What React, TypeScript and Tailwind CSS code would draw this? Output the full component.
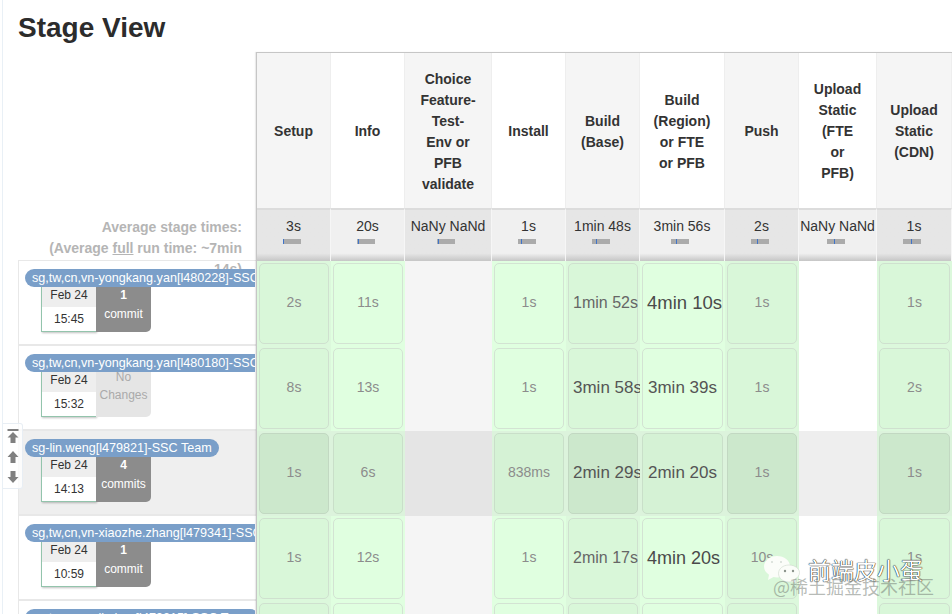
import React from "react";

type Cell = { t: string; big?: string } | null;

const heads = [
  ["Setup"],
  ["Info"],
  ["Choice", "Feature-", "Test-", "Env or", "PFB", "validate"],
  ["Install"],
  ["Build", "(Base)"],
  ["Build", "(Region)", "or FTE", "or PFB"],
  ["Push"],
  ["Upload", "Static", "(FTE", "or", "PFB)"],
  ["Upload", "Static", "(CDN)"],
];

const averages = [
  { t: "3s", tick: 0 },
  { t: "20s", tick: 1 },
  { t: "NaNy NaNd", tick: 1 },
  { t: "1s", tick: 3 },
  { t: "1min 48s", tick: 4 },
  { t: "3min 56s", tick: 5 },
  { t: "2s", tick: 6 },
  { t: "NaNy NaNd", tick: 7 },
  { t: "1s", tick: 8 },
];

const runs: { name: string; date: string; time: string; count: string; label: string; rows: Cell[]; hot?: boolean }[] = [
  {
    name: "sg,tw,cn,vn-yongkang.yan[l480228]-SSC Team",
    date: "Feb 24",
    time: "15:45",
    count: "1",
    label: "commit",
    rows: [
      { t: "2s" },
      { t: "11s" },
      null,
      { t: "1s" },
      { t: "1min 52s", big: "text-[16px] text-[#666]" },
      { t: "4min 10s", big: "text-[18.5px] text-[#4a4a4a]" },
      { t: "1s" },
      null,
      { t: "1s" },
    ],
  },
  {
    name: "sg,tw,cn,vn-yongkang.yan[l480180]-SSC Team",
    date: "Feb 24",
    time: "15:32",
    count: "No",
    label: "Changes",
    rows: [
      { t: "8s" },
      { t: "13s" },
      null,
      { t: "1s" },
      { t: "3min 58s", big: "text-[17px] text-[#555]" },
      { t: "3min 39s", big: "text-[17px] text-[#555]" },
      { t: "1s" },
      null,
      { t: "2s" },
    ],
  },
  {
    name: "sg-lin.weng[l479821]-SSC Team",
    date: "Feb 24",
    time: "14:13",
    count: "4",
    label: "commits",
    hot: true,
    rows: [
      { t: "1s" },
      { t: "6s" },
      null,
      { t: "838ms" },
      { t: "2min 29s", big: "text-[17px] text-[#555]" },
      { t: "2min 20s", big: "text-[17px] text-[#555]" },
      { t: "1s" },
      null,
      { t: "1s" },
    ],
  },
  {
    name: "sg,tw,cn,vn-xiaozhe.zhang[l479341]-SSC Team",
    date: "Feb 24",
    time: "10:59",
    count: "1",
    label: "commit",
    rows: [
      { t: "1s" },
      { t: "12s" },
      null,
      { t: "1s" },
      { t: "2min 17s", big: "text-[16px] text-[#666]" },
      { t: "4min 20s", big: "text-[18px] text-[#4a4a4a]" },
      { t: "10s" },
      null,
      { t: "1s" },
    ],
  },
  {
    name: "sg,tw,cn,vn-lin.hao[l479215]-SSC Team",
    date: "Feb 24",
    time: "10:41",
    count: "1",
    label: "commit",
    rows: [{ t: "" }, { t: "" }, null, { t: "" }, { t: "" }, { t: "" }, { t: "" }, null, { t: "" }],
  },
];

function cellShell(shaded: boolean, hot: boolean, empty: boolean) {
  if (empty) {
    if (hot) return shaded ? "bg-[#e5e5e5] border-y border-[#dedede]" : "bg-[#eeeeee] border-y border-[#e4e4e4]";
    return shaded ? "bg-[#f5f5f5] border-b border-[#e8e8e8]" : "bg-white border-b border-[#ececec]";
  }
  if (hot) return "bg-[#dcf3dc]";
  return shaded ? "bg-[#dcf8dc]" : "bg-[#e0ffe0]";
}

function boxTone(shaded: boolean, hot: boolean) {
  if (hot) return shaded ? "bg-[#cce8cc] border-[#c2d8c2]" : "bg-[#d5f2d5] border-[#c9dfc9]";
  return shaded ? "bg-[#d9f7d9] border-[#cfe0cf]" : "bg-[#e0ffe0] border-[#d3e3d3]";
}

function RunRow({ run }: { run: (typeof runs)[number] }) {
  const none = run.count === "No";
  return (
    <div className={`h-[85px] shrink-0 border border-r-0 border-[#e8e8e8] pl-[6px] pt-2 ${run.hot ? "bg-[#efefef]" : ""}`}>
      <div className="relative h-[18px] w-[230px] overflow-hidden">
        <div className="h-[18px] w-max whitespace-nowrap rounded-[9px] bg-[#7a9fc9] px-[7px] text-[12.6px] leading-[18px] text-white">
          {run.name}
        </div>
      </div>
      <div className="ml-[16px] flex h-[45px] w-[110px]">
        <div className="w-[55px] border-b border-l border-[#93c4ac] bg-white text-center text-[12px] text-[#333] shadow-[1px_1px_2px_rgba(0,0,0,0.25)]">
          <div className="h-5 bg-[#eeeeee] leading-[17px]">{run.date}</div>
          <div className="leading-[24px]">{run.time}</div>
        </div>
        <div
          className={`w-[55px] rounded-br-[5px] text-center text-[12px] ${
            none ? "bg-[#e5e5e5] text-[#aaaaaa]" : "bg-[#8c8c8c] text-white"
          }`}
        >
          <div className={none ? "h-[14px] leading-[11px]" : "h-[18px] font-bold leading-[17px]"}>{run.count}</div>
          <div className="leading-[18px]">{run.label}</div>
        </div>
      </div>
    </div>
  );
}

function NavArrow({ d, tall }: { d: string; tall?: boolean }) {
  return (
    <svg viewBox={tall ? "0 0 12 14" : "0 0 12 12"} className={`w-3 fill-[#808080] ${tall ? "h-[14px]" : "h-3"}`}>
      <path d={d} />
    </svg>
  );
}

export default function App() {
  return (
    <div className="relative flex h-[614px] w-[952px] overflow-hidden bg-white font-['Liberation_Sans',Arial,sans-serif] text-[#333]">
      <div className="h-full w-[3px] shrink-0 border-r border-[#e9f0f6]" />
      <div className="flex min-w-0 flex-1 flex-col pl-[15px]">
        <h2 className="h-[52px] shrink-0 pt-[10px] text-[28px] font-bold leading-[36px] text-[#2c2c2c]">Stage View</h2>
        <div className="flex min-h-0 flex-1">
          <div className="flex w-[238px] shrink-0 flex-col">
            <div className="h-[156px] shrink-0" />
            <div className="h-[52px] shrink-0 pr-[14px] pt-[9px] text-right text-[14px] font-bold leading-[21px] text-[#b5b5b5]">
              Average stage times:
              <br />
              (Average <span className="underline">full</span> run time: ~7min
              <br />
              14s)
            </div>
            {runs.map((run) => (
              <RunRow key={run.name} run={run} />
            ))}
          </div>

          <div className="grid min-w-0 flex-1 grid-cols-[74px_74px_87px_74px_74px_85px_74px_78px_75px] content-start border-l border-t border-[#c6c6c6] shadow-[-1px_0_1px_rgba(0,0,0,0.08)]">
            {heads.map((lines, i) => (
              <div
                key={i}
                className={`flex h-[155px] items-center justify-center border-r border-[#eeeeee] pt-[2px] text-center text-[14px] font-bold leading-[21px] ${
                  i % 2 === 0 ? "bg-[#f5f5f5]" : "bg-white"
                }`}
              >
                <div>
                  {lines.map((line) => (
                    <div key={line}>{line}</div>
                  ))}
                </div>
              </div>
            ))}
            {averages.map((a, i) => (
              <div
                key={i}
                className={`h-[53px] border-r border-t-2 border-r-[#f6f6f6] border-t-[#dcdcdc] bg-linear-to-b from-[85%] to-[#c6c6c6] pt-[7px] text-center text-[14px] leading-[18px] ${
                  i % 2 === 0 ? "from-[#e6e6e6]" : "from-[#f0f0f0]"
                }`}
              >
                <div className="whitespace-nowrap">{a.t}</div>
                <div className="mx-auto mt-[4px] h-[5px] w-[18px] -translate-x-[2px] bg-[#ababab]">
                  <div className="h-full w-px bg-[#3f74c9]" style={{ marginLeft: a.tick }} />
                </div>
              </div>
            ))}
            {runs.flatMap((run) =>
              run.rows.map((cell, i) => {
                const shaded = i % 2 === 0;
                return (
                  <div
                    key={run.name + i}
                    className={`h-[85px] border-r border-transparent p-[2px] pr-px ${cellShell(shaded, !!run.hot, !cell)}`}
                  >
                    {cell && (
                      <div
                        className={`h-full whitespace-nowrap rounded-[5px] border px-1 text-center ${boxTone(
                          shaded,
                          !!run.hot,
                        )} ${cell.big ? `${cell.big} leading-[78px]` : "text-[14px] leading-[76px] text-[#8c8c8c]"}`}
                      >
                        {cell.t}
                      </div>
                    )}
                  </div>
                );
              }),
            )}
          </div>
        </div>
      </div>

      {/* floating scroll control */}
      <div className="absolute left-[3px] top-[423px] flex h-[66px] w-[20px] flex-col items-center justify-between rounded-r-[3px] border border-l-0 border-[#e8eef4] bg-white/80 pb-[5px] pt-[5px]">
        <NavArrow tall d="M0.500 0h11v2h-11zM6 3l5.500 5.500H8.500V14h-5V8.500H0.500z" />
        <NavArrow d="M6 0l5.500 6H8.500v6h-5V6H0.500z" />
        <NavArrow d="M3.500 0h5v6h3L6 12 0.500 6h3z" />
      </div>

      {/* wechat watermark */}
      <div className="pointer-events-none absolute left-[763px] top-[555px]">
        <div className="flex items-center">
          <svg viewBox="0 0 38 28" className="h-[28px] w-[38px]">
            <path d="M14 1C6.800 1 1 5.700 1 11.500c0 3.400 2 6.300 5 8.200L5 25l5.500-3c1.100.3 2.300.4 3.500.4 7.200 0 13-4.800 13-10.900S21.200 1 14 1z" fill="#fbfdf9" />
            <path d="M26 10c-6 0-10.500 3.800-10.500 8.500S20 27 26 27c1 0 2-.1 2.900-.4l4.100 1.400-.9-3.800c2.700-1.600 4.400-3.900 4.400-6.700C36.500 13.800 32 10 26 10z" fill="#fbfdf9" stroke="#cfd8cc" strokeWidth="0.600" />
            <circle cx="22" cy="16" r="1.200" fill="#8c948c" />
            <circle cx="30" cy="16" r="1.200" fill="#8c948c" />
            <circle cx="9" cy="7" r="1" fill="#d5dbd5" />
            <circle cx="18" cy="7" r="1" fill="#d5dbd5" />
          </svg>
          <span className="ml-[7px] font-['Noto_Sans_CJK_SC',sans-serif] text-[23px] leading-[28px] text-white [text-shadow:0_0_1px_#000,0_0_1px_#000]">
            前端皮小蛋
          </span>
        </div>
        <div className="-mt-[8px] ml-[10px] whitespace-nowrap font-['Noto_Sans_CJK_SC',sans-serif] text-[18px] leading-[22px] text-[#70787080]">
          @稀土掘金技术社区
        </div>
      </div>
    </div>
  );
}
